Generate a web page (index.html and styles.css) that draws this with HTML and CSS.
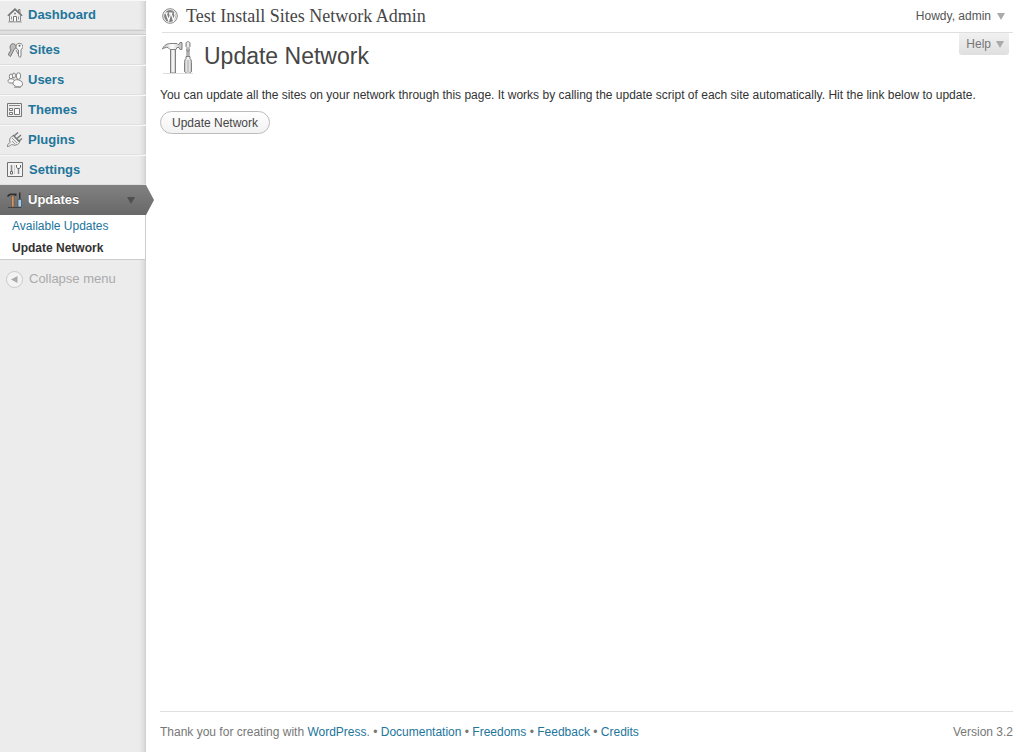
FILE: index.html
```html
<!DOCTYPE html>
<html lang="en">
<head>
<meta charset="utf-8">
<title>Update Network</title>
<link rel="stylesheet" href="styles.css">
</head>
<body>
<div class="layout">
  <nav class="sidebar" aria-label="Main menu">
    <ul class="menu">
      <li class="menu-item"><a href="#"><svg class="icon" viewBox="0 0 16 16"><path d="M2.500 8v6.500h11V8L8 3z" fill="#eee" stroke="#888"/><path d="M11.500 5V2.500H13V7" fill="#ccc" stroke="#888"/><path d="M.8 8.800 8 2l7.200 6.800" stroke="#777" stroke-width="1.300"/><path d="M6.500 14.500v-5h3v5" fill="#fff" stroke="#777"/><path d="M4.500 9.500v3M11.500 9.500v3" stroke="#999"/><circle cx="8" cy="6.500" r="1" fill="#888"/><path d="M1 15h14" stroke="#aaa"/></svg>Dashboard</a></li>
      <li class="menu-separator"></li>
      <li class="menu-item"><a href="#"><svg class="icon wide" viewBox="0 0 16 16"><path d="M4 2.500C6 1 9 2 9 4.500c0 1.500-1 2.500-2 3l-3.500 7L1.500 13l.5-2 2-3C2.500 6 3 4 4 2.500z" fill="#bbb" stroke="#777"/><path d="M9.500 2.500c1-1.500 5-1.500 6 .5 1 2 0 4-1.500 4.500V14l-1 1.500-1.500-1.500V8C9 7 8.500 4.500 9.500 2.500z" fill="#fafafa" stroke="#808080"/><circle cx="12.500" cy="3.700" r="1" fill="#666"/><path d="m9 8 2 4" stroke="#888"/></svg>Sites</a></li>
      <li class="menu-item"><a href="#"><svg class="icon" viewBox="0 0 16 16"><g fill="#fafafa" stroke="#858585"><ellipse cx="4" cy="4.500" rx="1.700" ry="2.500"/><ellipse cx="7" cy="3.500" rx="1.500" ry="2.500"/><path d="M1 9c0-3 6-3 6.500 0v2H3c-1 0-2-1-2-2z"/><ellipse cx="11.500" cy="4" rx="2.200" ry="3.300"/><path d="M6 12c0-4 3-5 6-4 3 1 4 3 3.500 5-1 2.500-8 2.500-9.500-1z"/></g><path d="M7 15.300h7" stroke="#999"/></svg>Users</a></li>
      <li class="menu-item"><a href="#"><svg class="icon" viewBox="0 0 16 16"><path d="M.5 1.500h14v13H.5z" fill="#eee" stroke="#777"/><path d="M2 3.500h11" stroke="#888"/><path d="M2.500 6.500h3v2h-3zM2.500 10.500h3v2h-3zM7.500 6.500h5v6h-5z" fill="#fff" stroke="#777"/></svg>Themes</a></li>
      <li class="menu-item"><a href="#"><svg class="icon" viewBox="0 0 16 16"><path d="M0 14.500c0-3 2-2 3-4-1-3 0-5 2-6l1.500-1 6 7c-2 3-5 3-8 2-1 1-2 2-4.500 2z" fill="#eee" stroke="#808080"/><path d="m6 3 7 7M7 4l4-3.500M10 6.500 14 3M12 9l3-2.500" stroke="#777" stroke-width="1.400"/><path d="m5 6 5 5M5 9l3 3" stroke="#999"/></svg>Plugins</a></li>
      <li class="menu-item"><a href="#"><svg class="icon wide" viewBox="0 0 16 16"><path d="M.5.500h15v14H.5z" fill="#f3f3f3" stroke="#707070"/><path d="M4.500 3v6M11.500 6v6" stroke="#888" stroke-width="1.500"/><path d="M3.500 9.500h2V12h-2zM9.500 3v2l1 1.500h2l1-1.500V3" fill="#fff" stroke="#666"/><path d="M7.500 3v9" stroke="#ccc"/></svg>Settings</a></li>
      <li class="menu-item current"><a href="#"><svg class="icon" viewBox="0 0 16 16"><path d="M0 4c1-2 3-2.500 5-2.500h4.500V4H8l-1-1H4L1 5z" fill="#303030"/><path d="M4.500 4H7v11H4.500z" fill="#d39565" stroke="#543" stroke-width=".5"/><path d="M12 .500h1.500V7H12z" fill="#333"/><path d="M11 7.500h3.500V15H11z" fill="#a9cbe9" stroke="#345" stroke-width=".6"/><path d="M1 15.500h13" stroke="#444"/></svg>Updates<svg class="toggle" viewBox="0 0 8 7"><path d="M0 0h8L4 7z" fill="#4f4f4f"/></svg></a></li>
    </ul>
    <ul class="submenu">
      <li><a href="#">Available Updates</a></li>
      <li><a href="#" class="selected">Update Network</a></li>
    </ul>
    <button class="collapse" type="button"><svg class="collapse-icon" viewBox="0 0 17 17"><circle cx="8.500" cy="8.500" r="8" fill="#f3f3f3" stroke="#c9c9c9"/><path d="M11.500 5v7L5 8.500z" fill="#aaa"/></svg>Collapse menu</button>
  </nav>
  <div class="content">
    <header class="site-header">
      <svg class="logo" viewBox="0 0 16 16"><circle cx="8" cy="8" r="7.300" fill="#f5f5f5" stroke="#888"/><circle cx="8" cy="8" r="5.900" fill="#808080"/><path d="M2.500 5h3.500M4 5l2.700 7.500L8.300 7 7.500 5h3M9 5l2.500 7.500L13 8c.5-1.500-1-2-.5-3.500" stroke="#fff" stroke-width="1.200"/></svg>
      <h1><a href="#">Test Install Sites Network Admin</a></h1>
      <button class="account" type="button">Howdy, admin<svg class="arrow" viewBox="0 0 8 7"><path d="M0 0h8L4 7z" fill="#aaa"/></svg></button>
    </header>
    <main class="page">
      <div class="heading">
        <svg class="tools" viewBox="0 0 32 34"><defs><linearGradient id="metal"><stop offset="0" stop-color="#bbb"/><stop offset=".5" stop-color="#fff"/><stop offset="1" stop-color="#bbb"/></linearGradient></defs><g stroke="#808080" fill="url(#metal)"><path d="M8.500 8.500h5V32h-5z"/><path d="M.5 8C2 4 5 2.500 9 2.500h6l1 1h1l1-2h2v7h-2l-1-2h-2l-1 2H8L6 6.500C4 6 2 7 .5 8z"/><path d="M25 8h2v8h-2z"/><path d="M24 2.500c0-2.500 4-2.500 4 0v3l-1 1V10h-2V6.500l-1-1z"/><path d="M24 15.500h4v2c1 1 1.500 2 1.500 4V30c0 3-7 3-7 0v-8.500c0-2 .5-3 1.500-4z"/></g><path d="M26 19v12" stroke="#999"/><path d="M1 32.500h30" stroke="#ddd"/></svg>
        <h2>Update Network</h2>
        <button class="help" type="button">Help<svg class="arrow" viewBox="0 0 8 7"><path d="M0 0h8L4 7z" fill="#aaa"/></svg></button>
      </div>
      <p class="intro">You can update all the sites on your network through this page. It works by calling the update script of each site automatically. Hit the link below to update.</p>
      <button class="button" type="button">Update Network</button>
    </main>
    <footer class="footer">
      <p>Thank you for creating with <a href="#">WordPress</a>. • <a href="#">Documentation</a> • <a href="#">Freedoms</a> • <a href="#">Feedback</a> • <a href="#">Credits</a></p>
      <p>Version 3.2</p>
    </footer>
  </div>
</div>
</body>
</html>
```
FILE: styles.css
```css
* { box-sizing: border-box; }
body {
  margin: 0;
  background: #fff;
  color: #333;
  font: 12px/18px "Liberation Sans", Arial, sans-serif;
}
ul, p, h1, h2 { margin: 0; padding: 0; list-style: none; font-weight: normal; }
a { color: #21759b; text-decoration: none; }
button { font: inherit; margin: 0; cursor: pointer; }
svg { flex: none; fill: none; }

.layout { display: flex; min-height: 100vh; }

.sidebar {
  flex: none;
  width: 146px;
  background: linear-gradient(to left, #ccc 0, #ddd 2px, #ececec 7px);
}
.menu-item {
  height: 30px;
  border-top: 1px solid #f9f9f9;
  border-bottom: 1px solid #dfdfdf;
}
.menu-item a {
  display: flex;
  align-items: center;
  gap: 5px;
  height: 28px;
  padding-left: 7px;
  font-size: 13px;
  line-height: 20px;
  font-weight: bold;
}
.icon { width: 16px; height: 16px; }
.icon.wide { margin-right: 1px; }
.menu-separator {
  height: 5px;
  background: #dfdfdf;
  border-top: 1px solid #ccc;
  border-bottom: 1px solid #ccc;
}
.menu-item.current {
  position: relative;
  width: 154px;
  border: 0;
  background: linear-gradient(#818181, #686868);
  clip-path: polygon(0 0, 146px 0, 100% 50%, 146px 100%, 0 100%);
}
.menu-item.current a { height: 30px; color: #fff; text-shadow: 0 -1px 0 #555; }
.toggle { width: 8px; height: 7px; margin-left: auto; margin-right: 19px; }
.submenu {
  background: #fff;
  border-right: 1px solid #ccc;
  border-bottom: 1px solid #ccc;
}
.submenu a { display: block; padding: 2px 12px; }
.submenu .selected { color: #333; font-weight: bold; }
.collapse {
  display: flex;
  align-items: center;
  gap: 6px;
  padding: 9px 6px;
  border: 0;
  background: none;
  color: #aaa;
  font-size: 13px;
  line-height: 20px;
}
.collapse-icon { width: 17px; height: 17px; }

.content {
  flex: 1;
  display: flex;
  flex-direction: column;
  padding: 0 15px 0 14px;
}
.site-header {
  display: flex;
  align-items: center;
  height: 33px;
  margin-left: 2px;
  border-bottom: 1px solid #dfdfdf;
}
.logo { width: 16px; height: 16px; margin-right: 8px; }
.site-header h1 { font: 18px/24px Georgia, "Liberation Serif", serif; }
.site-header h1 a { color: #464646; }
.account {
  display: flex;
  align-items: center;
  gap: 6px;
  margin-left: auto;
  padding: 0 8px 0 0;
  border: 0;
  background: none;
  color: #555;
}
.arrow { width: 8px; height: 7px; }

.page { flex: 1; }
.heading { display: flex; align-items: flex-start; height: 53px; }
.tools { width: 32px; height: 34px; margin: 8px 10px 0 2px; }
.heading h2 { padding-top: 8px; color: #464646; font-size: 23px; line-height: 30px; }
.help {
  display: flex;
  align-items: center;
  gap: 5px;
  height: 22px;
  margin: 0 4px 0 auto;
  padding: 0 5px 0 7px;
  border: 0;
  border-radius: 0 0 3px 3px;
  background: linear-gradient(#f1f1f1, #dfdfdf);
  color: #777;
}
.button {
  display: block;
  height: 23px;
  margin-top: 7px;
  padding: 0 11px;
  border: 1px solid #bbb;
  border-radius: 12px;
  background: linear-gradient(#fff, #f2f2f2);
  color: #464646;
}
.footer {
  display: flex;
  justify-content: space-between;
  padding: 11px 0;
  border-top: 1px solid #dfdfdf;
  color: #777;
}
```
